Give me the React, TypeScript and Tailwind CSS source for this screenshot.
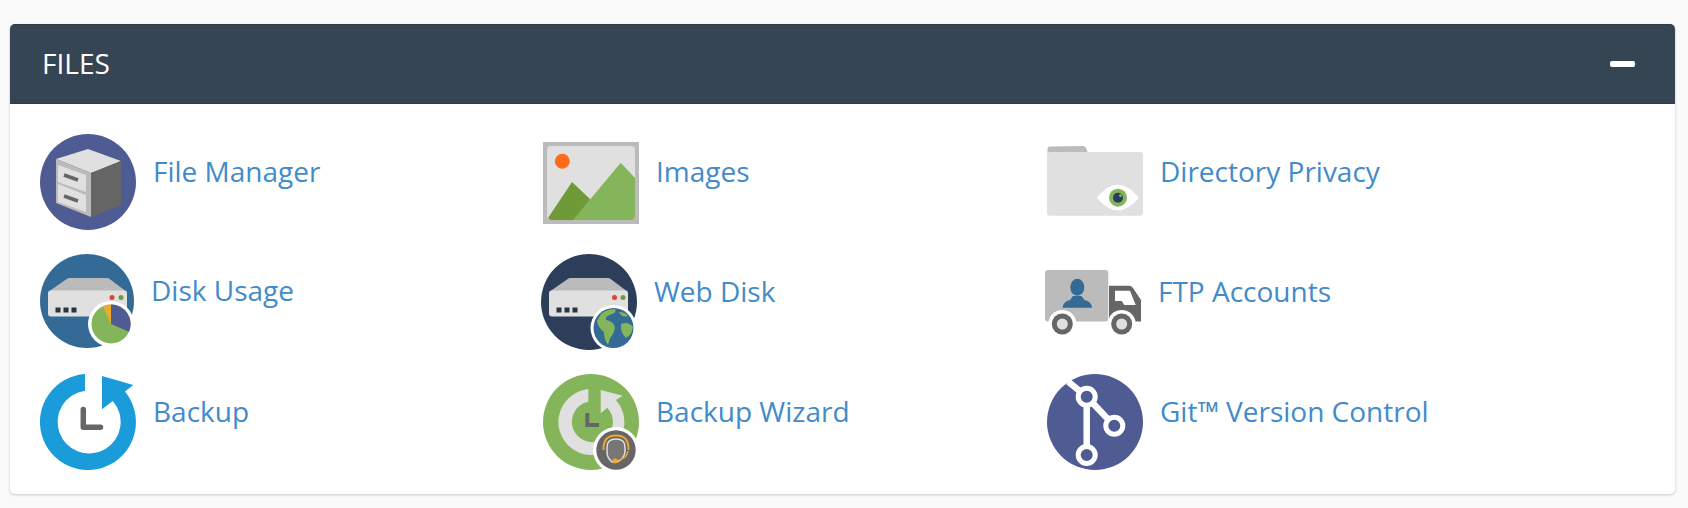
import React from "react";

const Server = ({ dots }: { dots: [number, number] }) => (
  <g>
    <path d="M8 38 L27.500 24.500 Q28 24 29 24 L67 24 Q68 24 69 24.500 L87 38 Z" fill="#bbbbbb" />
    <rect x="8" y="36.500" width="79" height="26" rx="3" fill="#e0e0e0" />
    <circle cx={dots[0]} cy="43.500" r="2.500" fill="#e2432f" />
    <circle cx={dots[1]} cy="43.500" r="2.500" fill="#6f9a37" />
    <rect x="15.500" y="53.500" width="5" height="5" fill="#2a3342" />
    <rect x="23.500" y="53.500" width="5" height="5" fill="#2a3342" />
    <rect x="31.500" y="53.500" width="5" height="5" fill="#2a3342" />
  </g>
);

const FileManagerIcon = () => (
  <svg viewBox="0 0 96 96" className="block w-[96px] h-[96px]">
    <circle cx="48" cy="48" r="48" fill="#4f5b93" />
    <path d="M16 25 L48 15 L81 27 L51 39 Z" fill="#e0e0e0" />
    <path d="M51 39 L81 27 L81 71 L51 83 Z" fill="#666666" />
    <path d="M16 25 L51 39 L51 83 L16 69 Z" fill="#bbbbbb" />
    <path d="M18 31 L46 41 L46 58 L18 48 Z" fill="#e0e0e0" />
    <path d="M18 50 L46 61 L46 78 L18 68 Z" fill="#e0e0e0" />
    <path d="M24 41 L38 46 M24 62 L38 67" stroke="#666666" strokeWidth="3.500" />
  </svg>
);

const ImagesIcon = () => (
  <svg viewBox="0 0 96 82" className="block w-[96px] h-[82px]">
    <rect width="96" height="82" fill="#bbbbbb" />
    <rect x="4" y="4" width="88" height="74" rx="4" fill="#e0e0e0" />
    <circle cx="19.300" cy="19.300" r="7.500" fill="#ff6c1a" />
    <path d="M5 76 L29 40 L47 57 L40 78 L8 78 Q6 78 5 76 Z" fill="#6f9a37" />
    <path d="M30 78 L77.700 20.700 L92 36 L92 74 Q92 78 88 78 Z" fill="#84b55a" />
  </svg>
);

const DirectoryIcon = () => (
  <svg viewBox="0 0 96 70" className="block w-[96px] h-[70px]">
    <path d="M0.500 7 L0.500 3 Q0.500 0.500 3 0.500 L36 0 Q38 0 39 2 L41 7 Z" fill="#bbbbbb" />
    <rect x="0" y="6" width="96" height="63.700" rx="3" fill="#e0e0e0" />
    <path d="M49.700 51.700 Q70.800 26 92 51.700 Q70.800 77 49.700 51.700 Z" fill="#ffffff" />
    <circle cx="71" cy="51.700" r="9" fill="#84b55a" />
    <circle cx="71" cy="51.700" r="5" fill="#2a3d5a" />
    <circle cx="73.500" cy="49.500" r="1.500" fill="#84b55a" />
  </svg>
);

const DiskUsageIcon = () => (
  <svg viewBox="0 0 94 94" className="block w-[94px] h-[94px]">
    <circle cx="47" cy="47" r="47" fill="#336a96" />
    <Server dots={[72, 81]} />
    <circle cx="71" cy="70" r="23" fill="#ffffff" />
    <circle cx="71" cy="70" r="19.500" fill="#84b55a" />
    <path d="M71 70 L71 50.500 A19.500 19.500 0 0 1 89 77.800 Z" fill="#4f5b93" />
    <path d="M71 70 L71 50.500 A19.500 19.500 0 0 0 63 52.300 Z" fill="#f0a92c" />
  </svg>
);

const WebDiskIcon = () => (
  <svg viewBox="0 0 96 96" className="block w-[96px] h-[96px]">
    <circle cx="48" cy="48" r="48" fill="#2d3e5a" />
    <Server dots={[73.500, 82]} />
    <circle cx="72.500" cy="74" r="23" fill="#ffffff" />
    <circle cx="72.500" cy="74" r="20" fill="#336a96" />
    <path d="M60 60 Q66 55 74 55 Q76 59 71 60 Q64 62 65 66 Q72 67 74 73 Q73 80 69 84 L67 91 Q63 86 63 78 Q57 74 56 67 Z" fill="#84b55a" />
    <path d="M80 70 Q87 67 92 73 Q91 81 85 84 Q79 78 80 70 Z" fill="#84b55a" />
    <path d="M78 58 Q84 58 87 62 Q81 64 78 58 Z" fill="#84b55a" />
  </svg>
);

const TruckIcon = () => (
  <svg viewBox="0 0 96 65" className="block w-[96px] h-[65px]">
    <rect x="0" y="0" width="63.300" height="51.500" rx="3" fill="#bbbbbb" />
    <path d="M64 15.700 L84 15.700 Q86.500 15.700 88 18 L96 30 L96 51.500 L64 51.500 Z" fill="#666666" />
    <path d="M70 20.700 L85 20.700 L90.700 35 L79.300 35 L76.700 31 L70 31 Z" fill="#ffffff" />
    <ellipse cx="32.300" cy="17.300" rx="7" ry="8.500" fill="#336a96" />
    <path d="M17.700 37.700 Q18 31.500 25 30 L28 26 L36.500 26 L39.500 30 Q46.500 31.500 47 37.700 Z" fill="#336a96" />
    <circle cx="17.300" cy="54" r="14" fill="#ffffff" />
    <circle cx="76.700" cy="54" r="14" fill="#ffffff" />
    <circle cx="17.300" cy="54" r="10.500" fill="#666666" />
    <circle cx="76.700" cy="54" r="10.500" fill="#666666" />
    <circle cx="17.300" cy="54" r="5.500" fill="#e0e0e0" />
    <circle cx="76.700" cy="54" r="5.500" fill="#e0e0e0" />
  </svg>
);

const BackupIcon = () => (
  <svg viewBox="0 0 96 96" className="block w-[96px] h-[96px]">
    <path d="M45 0.100 A48 48 0 1 0 85 17.500 L93.300 11 L62 2 L62 35.300 L72.700 27 A31.500 31.500 0 1 1 45 16.700 Z" fill="#1a9cdb" />
    <path d="M43.300 35.500 L43.300 53.300 L60.500 53.300" fill="none" stroke="#666666" strokeWidth="5.500" strokeLinecap="round" strokeLinejoin="round" />
  </svg>
);

const WizardIcon = () => (
  <svg viewBox="0 0 96 96" className="block w-[96px] h-[96px]">
    <circle cx="48" cy="48" r="48" fill="#84b55a" />
    <path d="M45.300 15.100 A33 33 0 1 0 73 26 L79.700 21.700 L57.700 16 L57.700 39.300 L64.300 33.700 A20.500 20.500 0 1 1 45.300 27.700 Z" fill="#e0e0e0" />
    <path d="M44.300 39 L44.300 51 L56 51" fill="none" stroke="#666666" strokeWidth="4" />
    <circle cx="73" cy="76" r="23" fill="#ffffff" />
    <circle cx="73" cy="76" r="19.700" fill="#666666" />
    <path d="M64 73 Q64 65 73 65 Q82 65 82 73 L82 78 Q81 85 74 88 L69 88 Q64 84 64 78 Z" fill="#777777" stroke="#e0e0e0" strokeWidth="1.500" />
    <path d="M60.500 76 Q60 61.500 73 61.500 Q86 61.500 85.500 76" fill="none" stroke="#f0a92c" strokeWidth="2" />
    <path d="M85 77 Q84 85 73 87" fill="none" stroke="#f0a92c" strokeWidth="1.500" />
    <circle cx="72" cy="87" r="2.500" fill="#f0a92c" />
  </svg>
);

const GitIcon = () => (
  <svg viewBox="0 0 96 96" className="block w-[96px] h-[96px]">
    <circle cx="48" cy="48" r="48" fill="#4f5b93" />
    <path d="M21.300 7.700 L39.700 22.700 L39.700 81 M39.700 22.700 L67.300 51.700" fill="none" stroke="#ffffff" strokeWidth="6.500" />
    <circle cx="39.700" cy="22.700" r="8.500" fill="#4f5b93" stroke="#ffffff" strokeWidth="5" />
    <circle cx="67.300" cy="51.700" r="8.500" fill="#4f5b93" stroke="#ffffff" strokeWidth="5" />
    <circle cx="39.700" cy="81" r="8.500" fill="#4f5b93" stroke="#ffffff" strokeWidth="5" />
  </svg>
);

const Tool = ({ icon, label, box, text }: { icon: React.ReactNode; label: string; box: string; text: string }) => (
  <div className="flex items-start">
    <div className={box}>{icon}</div>
    <a href="#" className={text}>{label}</a>
  </div>
);

const link = "ml-[17px] text-[28px] leading-[34px] text-[#428bca] whitespace-nowrap";

export default function App() {
  return (
    <div className="min-h-screen bg-[#fafafa] pt-[24px] pl-[10px] pr-[13px]" style={{ fontFamily: '"Open Sans", sans-serif' }}>
      <section className="h-[470px] rounded-[5px] bg-white shadow-[0_1px_3px_rgba(0,0,0,0.2)]">
        <header className="flex h-[80px] items-center justify-between rounded-t-[5px] border-y border-[#2c3a49] bg-[#364554] pl-[32px] pr-[40px]">
          <h2 className="mb-[2px] text-[28px] leading-[32px] text-white">FILES</h2>
          <span className="block h-[6px] w-[25px] rounded-[2px] bg-white" />
        </header>
        <div className="grid grid-cols-[503px_504px_1fr] auto-rows-[120px] pl-[30px] pt-[30px]">
          <Tool icon={<FileManagerIcon />} label="File Manager" box="shrink-0" text={`${link} mt-[20px]`} />
          <Tool icon={<ImagesIcon />} label="Images" box="shrink-0 mt-[8px]" text={`${link} mt-[20px]`} />
          <Tool icon={<DirectoryIcon />} label="Directory Privacy" box="shrink-0 mt-[12px]" text={`${link} mt-[20px]`} />
          <Tool icon={<DiskUsageIcon />} label="Disk Usage" box="shrink-0" text={`${link} mt-[19px]`} />
          <Tool icon={<WebDiskIcon />} label="Web Disk" box="shrink-0 -ml-[2px]" text={`${link} mt-[20px]`} />
          <Tool icon={<TruckIcon />} label="FTP Accounts" box="shrink-0 -ml-[2px] mt-[16px]" text={`${link} mt-[20px]`} />
          <Tool icon={<BackupIcon />} label="Backup" box="shrink-0" text={`${link} mt-[20px]`} />
          <Tool icon={<WizardIcon />} label="Backup Wizard" box="shrink-0" text={`${link} mt-[20px]`} />
          <Tool icon={<GitIcon />} label="Git™ Version Control" box="shrink-0" text={`${link} mt-[20px]`} />
        </div>
      </section>
    </div>
  );
}
